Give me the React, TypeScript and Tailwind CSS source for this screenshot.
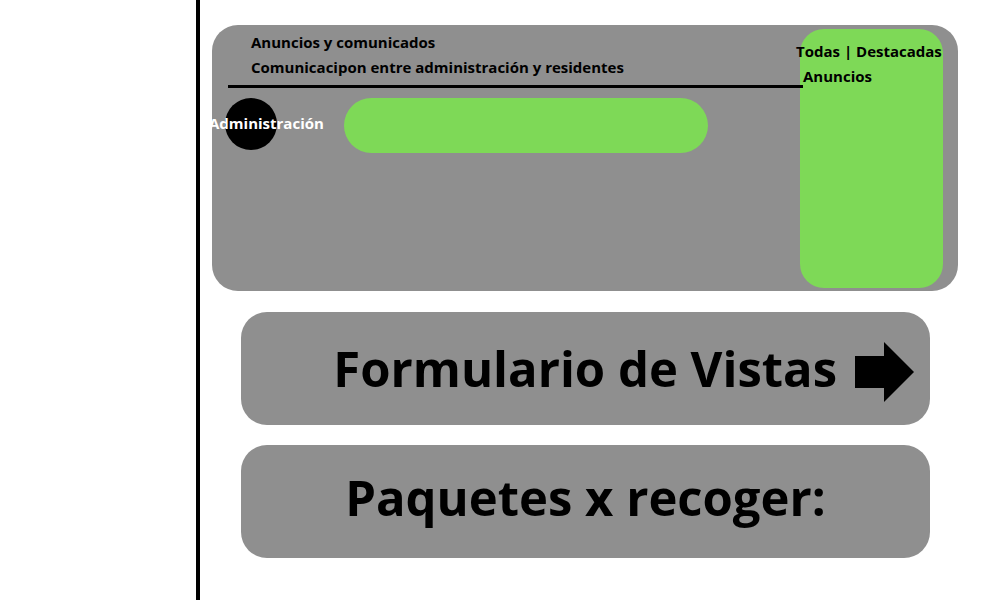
const GRAY = "bg-[#8f8f8f]";
const GREEN = "bg-[#7ed957]";

function Arrow() {
  return (
    <svg width="59" height="60" viewBox="0 0 59 60" className="ml-[18px] mt-[7px] shrink-0">
      <rect x="0" y="14" width="30" height="32" fill="#000" />
      <polygon points="29,0 59,30 29,60" fill="#000" />
    </svg>
  );
}

export default function App() {
  return (
    <div className="flex h-[600px] w-[1000px] overflow-hidden bg-white font-['Open_Sans',sans-serif] font-bold text-black">
      <div className="w-[200px] shrink-0 border-r-4 border-black" />

      <div className="flex flex-col pt-[25px]">
        {/* anuncios */}
        <section className={`ml-[12px] flex h-[266px] w-[746px] rounded-[26px] ${GRAY} pt-[4px] pb-[3px] pr-[15px]`}>
          <div className="flex min-w-0 flex-1 flex-col">
            <div className="pl-[39px] pt-[1px] text-[15px] leading-[25px]">
              <p>Anuncios y comunicados</p>
              <p className="whitespace-nowrap">Comunicacipon entre administración y residentes</p>
            </div>
            <div className="relative ml-[16px] mt-[5px] h-[3px] w-[575px] shrink-0 bg-black" />
            <div className="relative mt-[10px] flex items-start">
              <div className="ml-[13px] h-[52px] w-[52px] shrink-0 rounded-full bg-black" />
              <span className="absolute left-[-3px] top-[15px] whitespace-nowrap text-[15px] leading-[20px] text-white">
                Administración
              </span>
              <div className={`ml-[67px] h-[55px] w-[364px] shrink-0 rounded-full ${GREEN}`} />
            </div>
          </div>

          <aside className={`w-[143px] shrink-0 rounded-[24px] ${GREEN} pt-[10px] text-[15px] leading-[25px]`}>
            <p className="-ml-[4px] whitespace-nowrap">Todas | Destacadas</p>
            <p className="ml-[3px]">Anuncios</p>
          </aside>
        </section>

        <button className={`ml-[41px] mt-[21px] flex h-[113px] w-[689px] items-center justify-end rounded-[26px] ${GRAY} pr-[16px] text-[49px] leading-[49px]`}>
          <span>Formulario de Vistas</span>
          <Arrow />
        </button>

        <button className={`ml-[41px] mt-[20px] flex h-[113px] w-[689px] items-center justify-center rounded-[26px] ${GRAY} pb-[8px] text-[49px] leading-[49px]`}>
          Paquetes x recoger:
        </button>
      </div>
    </div>
  );
}
